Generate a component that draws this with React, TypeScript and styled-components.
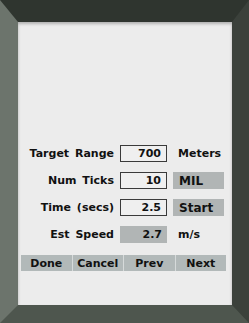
import React from "react";
import styled, { createGlobalStyle } from "styled-components";

const Global = createGlobalStyle`
  html, body { margin: 0; padding: 0; background: #3a403a; }
  * { box-sizing: border-box; }
`;

const Bezel = styled.div`
  width: 249px;
  height: 323px;
  border-style: solid;
  border-width: 22px 17px 18px 18px;
  border-color: #2f352f #3b413b #4e564e #6c746c;
  display: flex;
`;

const Screen = styled.div`
  flex: 1;
  background: #ececec;
  box-shadow: inset 0 2px 3px rgba(0, 0, 0, 0.25);
  display: flex;
  flex-direction: column;
  padding-top: 123px;
  font-family: "DejaVu Sans", Verdana, sans-serif;
  font-weight: bold;
  font-size: 11px;
  color: #111;
`;

const Form = styled.div`
  display: grid;
  grid-template-columns: 96px 47px 51px;
  grid-auto-rows: 17px;
  column-gap: 6px;
  row-gap: 10px;
`;

const Label = styled.div`
  display: flex;
  align-items: center;
  justify-content: flex-end;
  word-spacing: 2px;
  white-space: nowrap;
`;

const Value = styled.div<{ $filled?: boolean }>`
  display: flex;
  align-items: center;
  justify-content: flex-end;
  padding-right: 5px;
  background: ${(p) => (p.$filled ? "#b1b5b5" : "#efefef")};
  border: ${(p) => (p.$filled ? "none" : "1.5px solid #3a3a3a")};
`;

const Unit = styled.div<{ $filled?: boolean }>`
  display: flex;
  align-items: center;
  padding-left: ${(p) => (p.$filled ? "6px" : "5px")};
  background: ${(p) => (p.$filled ? "#b1b5b5" : "transparent")};
  font-size: ${(p) => (p.$filled ? "12px" : "11px")};
`;

const ButtonBar = styled.div`
  margin: 12px 6px 0 3px;
  height: 16px;
  display: grid;
  grid-template-columns: repeat(4, 1fr);
  column-gap: 1px;
  background: #d6dada;
`;

const Btn = styled.div`
  background: #b2b9b9;
  display: flex;
  align-items: center;
  justify-content: center;
`;

export default function App() {
  return (
    <>
      <Global />
      <Bezel>
        <Screen>
          <Form>
            <Label>Target Range</Label>
            <Value>700</Value>
            <Unit>Meters</Unit>
            <Label>Num Ticks</Label>
            <Value>10</Value>
            <Unit $filled>MIL</Unit>
            <Label>Time (secs)</Label>
            <Value>2.5</Value>
            <Unit $filled>Start</Unit>
            <Label>Est Speed</Label>
            <Value $filled>2.7</Value>
            <Unit>m/s</Unit>
          </Form>
          <ButtonBar>
            <Btn>Done</Btn>
            <Btn>Cancel</Btn>
            <Btn>Prev</Btn>
            <Btn>Next</Btn>
          </ButtonBar>
        </Screen>
      </Bezel>
    </>
  );
}
